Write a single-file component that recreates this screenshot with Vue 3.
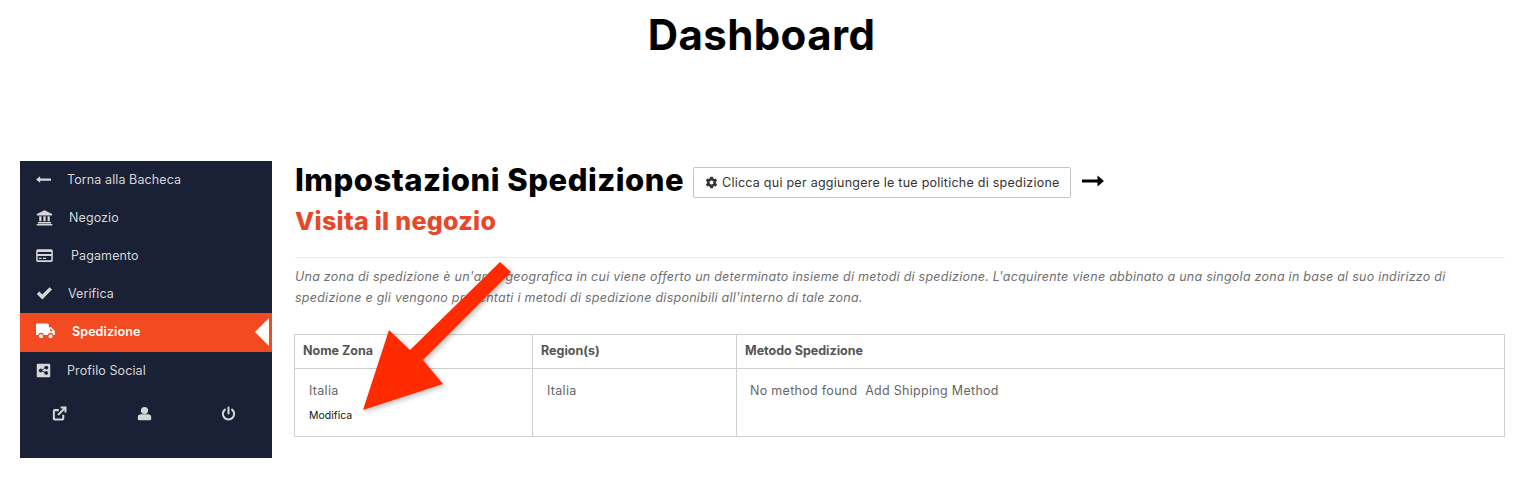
<script setup>
const menu = [
  { label: 'Torna alla Bacheca', icon: 'back', gap: 14 },
  { label: 'Negozio', icon: 'bank', gap: 16 },
  { label: 'Pagamento', icon: 'card', gap: 18 },
  { label: 'Verifica', icon: 'check', gap: 15 },
  { label: 'Spedizione', icon: 'truck', gap: 17, active: true },
  { label: 'Profilo Social', icon: 'share', gap: 14 },
]
</script>

<template>
  <div class="page">
    <h1 class="page-title">Dashboard</h1>
    <div class="layout">
      <aside class="sidebar">
        <a
          v-for="item in menu"
          :key="item.label"
          class="menu-item"
          :class="{ active: item.active }"
        >
          <svg class="menu-icon" :class="'icon-' + item.icon" viewBox="0 0 20 20" fill="currentColor">
            <path v-if="item.icon === 'back'" d="M0 10l5.500-4.200v2.700H20v3.200H5.500v2.500z" />
            <path
              v-if="item.icon === 'bank'"
              d="M10 1.500l9 4.300v1.900H1V5.800zM2.300 15.300h15.400V17H2.300zM.8 17.600h18.400V19.300H.8zM3.800 8.500h2.600v6H3.800zM8.700 8.500h2.600v6H8.700zM13.600 8.500h2.600v6h-2.600z"
            />
            <path
              v-if="item.icon === 'card'"
              fill-rule="evenodd"
              d="M2 2.500h16A1.800 1.800 0 0 1 19.800 4.300v11.400A1.800 1.800 0 0 1 18 17.500H2A1.800 1.800 0 0 1 .2 15.700V4.300A1.800 1.800 0 0 1 2 2.500zM2 6v2.200h16V6zM2 10.500v5h16v-5zM3.500 12.500h3V14h-3zM8 12.500h4V14H8z"
            />
            <path v-if="item.icon === 'check'" d="M1 10.500l2.900-2.900 3.500 3.500L16 2.500l2.900 2.900L7.400 17z" />
            <path
              v-if="item.icon === 'truck'"
              fill-rule="evenodd"
              d="M1.500 1.500h10.500A1.500 1.500 0 0 1 13.500 3v2.500h2.500l3.800 4v4.300h-1.600a3 3 0 0 0-5.900 0H8.300a3 3 0 0 0-5.900 0H0V3A1.500 1.500 0 0 1 1.500 1.500zM14.800 7v2.700h3L15.400 7zM5.300 12.800a2.100 2.100 0 1 1 0 4.200 2.100 2.100 0 0 1 0-4.200zM15.300 12.800a2.100 2.100 0 1 1 0 4.200 2.100 2.100 0 0 1 0-4.200z"
            />
            <path
              v-if="item.icon === 'share'"
              fill-rule="evenodd"
              d="M2.500 1h15A1.500 1.500 0 0 1 19 2.500v15a1.500 1.500 0 0 1-1.500 1.500h-15A1.500 1.500 0 0 1 1 17.500v-15A1.500 1.500 0 0 1 2.500 1zM13.500 4a2.300 2.300 0 0 0-2.200 3L8 8.800a2.300 2.300 0 1 0 0 2.400l3.300 1.800a2.300 2.300 0 1 0 .8-1.400L8.700 10.700v-1.400l3.400-1.900A2.300 2.300 0 1 0 13.500 4z"
            />
          </svg>
          <span class="menu-label" :style="{ marginLeft: item.gap + 'px' }">{{ item.label }}</span>
          <span v-if="item.active" class="active-caret"></span>
        </a>
        <div class="sidebar-foot">
          <svg class="foot-icon" viewBox="0 0 20 20" fill="none" stroke="currentColor" stroke-width="2.700">
            <path d="M15 11.500V17a1 1 0 0 1-1 1H3.500a1 1 0 0 1-1-1V6.500a1 1 0 0 1 1-1H9" />
            <path d="M8 12L17.500 2.500M11.500 2h6.500v6.500" />
          </svg>
          <svg class="foot-icon" viewBox="0 0 20 20" fill="currentColor">
            <circle cx="10" cy="6" r="4.800" />
            <path d="M3 19a2 2 0 0 1-2-2v-1.500A4.500 4.500 0 0 1 5.500 11h9a4.500 4.500 0 0 1 4.500 4.500V17a2 2 0 0 1-2 2z" />
          </svg>
          <svg class="foot-icon" viewBox="0 0 20 20" fill="none" stroke="currentColor" stroke-width="2.700" stroke-linecap="round">
            <path d="M10 2v8M14.800 4.800a7.500 7.500 0 1 1-9.600 0" />
          </svg>
        </div>
      </aside>

      <main class="content">
        <div class="heading-row">
          <h2 class="heading">Impostazioni Spedizione</h2>
          <button class="policy-btn" type="button">
            <svg class="gear" viewBox="0 0 20 20" fill="currentColor" fill-rule="evenodd">
              <path d="M8 1h4l.6 2.600 1.500.9 2.600-.8 2 3.500-2 1.800v2l2 1.800-2 3.500-2.600-.8-1.500.9L12 19H8l-.6-2.600-1.500-.9-2.600.8-2-3.500 2-1.800V9L1.300 7.200l2-3.500 2.600.8 1.500-.9zM10 7a3 3 0 1 0 0 6 3 3 0 0 0 0-6z" />
            </svg>
            Clicca qui per aggiungere le tue politiche di spedizione
          </button>
          <svg class="next-arrow" viewBox="0 0 22 14" fill="currentColor">
            <path d="M0 5.500h15.500V1.500L22 7l-6.500 5.500V8.500H0z" />
          </svg>
        </div>
        <a class="shop-link">Visita il negozio</a>
        <hr class="divider" />
        <p class="intro">
          Una zona di spedizione è un'area geografica in cui viene offerto un determinato insieme di metodi di spedizione. L'acquirente viene abbinato a una singola zona in base al suo indirizzo di spedizione e gli vengono presentati i metodi di spedizione disponibili all'interno di tale zona.
        </p>
        <table class="zones">
          <thead>
            <tr>
              <th class="col-zone">Nome Zona</th>
              <th class="col-region">Region(s)</th>
              <th>Metodo Spedizione</th>
            </tr>
          </thead>
          <tbody>
            <tr>
              <td class="zone-cell">
                <div>Italia</div>
                <a class="edit-link">Modifica</a>
              </td>
              <td>Italia</td>
              <td class="method-cell">No method found&nbsp; Add Shipping Method</td>
            </tr>
          </tbody>
        </table>
      </main>
    </div>

    <svg class="callout" viewBox="0 0 1523 485">
      <defs>
        <filter id="arrow-shadow" x="-20%" y="-20%" width="140%" height="140%">
          <feDropShadow dx="2" dy="2" stdDeviation="2.500" flood-color="#000" flood-opacity="0.25" />
        </filter>
      </defs>
      <polygon
        points="500,262 511,272 423,360 443,384 363,410 389,330 410,350"
        fill="#ff2a00"
        filter="url(#arrow-shadow)"
      />
    </svg>
  </div>
</template>

<style scoped>
.page {
  position: relative;
  width: 1523px;
  height: 485px;
  overflow: hidden;
  background: #fff;
  font-family: Inter, "Liberation Sans", sans-serif;
}

.page-title {
  margin: 0;
  padding-top: 11px;
  height: 150px;
  box-sizing: border-box;
  text-align: center;
  font-size: 42px;
  line-height: 48px;
  font-weight: 700;
  letter-spacing: 0.4px;
  color: #000;
}

.layout {
  display: flex;
  align-items: flex-start;
  padding-left: 20px;
  margin-top: 11px;
}

.sidebar {
  width: 252px;
  height: 297px;
  flex: none;
  background: #1a2035;
  color: #d6d6d8;
}

.menu-item {
  position: relative;
  display: flex;
  align-items: center;
  box-sizing: border-box;
  height: 38px;
  padding: 0 0 2px 16px;
  font-size: 12.500px;
  letter-spacing: 0.1px;
}

.menu-item.active {
  height: 39px;
  padding-bottom: 3px;
  background: #f24a21;
  color: #fff;
  font-weight: 600;
}

.menu-icon {
  width: 17px;
  height: 17px;
  flex: none;
}

.icon-truck {
  width: 19px;
  height: 19px;
}

.icon-back,
.icon-share {
  width: 15px;
  height: 15px;
  margin-right: 2px;
}

.active-caret {
  position: absolute;
  right: 3px;
  top: 5px;
  border-style: solid;
  border-width: 14px 14px 14px 0;
  border-color: transparent #fff transparent transparent;
}

.sidebar-foot {
  display: flex;
  justify-content: space-between;
  padding: 16px 36px 0 32px;
}

.foot-icon {
  width: 15px;
  height: 15px;
}

.content {
  margin-left: 23px;
  width: 1210px;
}

.heading-row {
  display: flex;
  align-items: center;
  height: 38px;
}

.heading {
  margin: 0;
  font-size: 31px;
  line-height: 38px;
  font-weight: 800;
  color: #000;
  white-space: nowrap;
  width: 388px;
  flex: none;
  letter-spacing: 0.5px;
}

.policy-btn {
  display: flex;
  align-items: center;
  gap: 4px;
  width: 378px;
  height: 31px;
  padding: 0 0 0 11px;
  margin: 4px 0 0 10px;
  flex: none;
  background: #fff;
  border: 1px solid #c4c4c4;
  border-radius: 2px;
  font-family: inherit;
  font-size: 12.500px;
  letter-spacing: 0.25px;
  color: #333;
  white-space: nowrap;
}

.gear {
  width: 13px;
  height: 13px;
  flex: none;
}

.next-arrow {
  width: 22px;
  height: 14px;
  margin: 2px 0 0 11px;
  color: #000;
}

.shop-link {
  display: block;
  margin-top: 3px;
  font-size: 25px;
  line-height: 38px;
  font-weight: 800;
  color: #e8472a;
  letter-spacing: 0.3px;
}

.divider {
  margin: 17px 0 0;
  border: 0;
  border-top: 1px solid #eaeaea;
}

.intro {
  margin: 8px 0 0;
  font-size: 12.500px;
  line-height: 21px;
  font-style: italic;
  color: #6f6f6f;
  letter-spacing: 0.25px;
}

.zones {
  width: 1211px;
  margin: 26px 0 0 -1px;
  border-collapse: collapse;
  table-layout: fixed;
  font-size: 12.500px;
  color: #666;
}

.zones th,
.zones td {
  box-sizing: border-box;
  border: 1px solid #cfcfcf;
  text-align: left;
  vertical-align: top;
}

.zones th {
  height: 34px;
  padding: 0 8px 2px;
  vertical-align: middle;
  font-weight: 700;
  color: #555;
}

.zones td {
  height: 68px;
  padding: 13px 14px 0;
  line-height: 17px;
  letter-spacing: 0.3px;
}

.col-zone {
  width: 238px;
}

.col-region {
  width: 204px;
}

.zones td.zone-cell {
  padding-left: 14px;
}

.zones td.method-cell {
  padding-left: 13px;
  white-space: nowrap;
}

.edit-link {
  display: block;
  margin-top: 8px;
  font-size: 10.500px;
  letter-spacing: 0;
  color: #111;
}

.callout {
  position: absolute;
  left: 0;
  top: 0;
  width: 1523px;
  height: 485px;
  pointer-events: none;
}
</style>
